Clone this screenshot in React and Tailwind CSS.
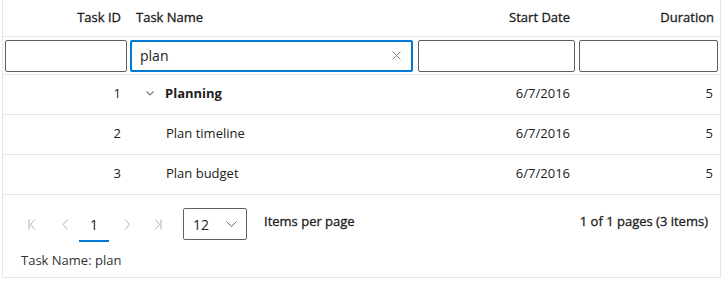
import React from "react";

const font = { fontFamily: '"Open Sans", "Noto Sans", sans-serif' };

function Chevron({ className }) {
  return (
    <svg className={className} width="8" height="5" viewBox="0 0 8 5" fill="none">
      <path d="M0.5 0.5 L4 4 L7.5 0.5" stroke="currentColor" strokeWidth="1.1" />
    </svg>
  );
}

function PagerIcon({ type }) {
  const paths = {
    first: (
      <>
        <path d="M1 0.5 V10.5" stroke="currentColor" strokeWidth="1" />
        <path d="M7 0.5 L2.5 5.5 L7 10.5" stroke="currentColor" strokeWidth="1" fill="none" />
      </>
    ),
    prev: <path d="M5.5 0.5 L1 5.5 L5.5 10.5" stroke="currentColor" strokeWidth="1" fill="none" />,
    next: <path d="M1 0.5 L5.5 5.5 L1 10.5" stroke="currentColor" strokeWidth="1" fill="none" />,
    last: (
      <>
        <path d="M1 0.5 L5.5 5.5 L1 10.5" stroke="currentColor" strokeWidth="1" fill="none" />
        <path d="M7 0.5 V10.5" stroke="currentColor" strokeWidth="1" />
      </>
    ),
  };
  return (
    <svg width="8" height="11" viewBox="0 0 8 11" className="text-[#b0b0b0]">
      {paths[type]}
    </svg>
  );
}

const rows = [
  { id: 1, name: "Planning", date: "6/7/2016", dur: 5, parent: true },
  { id: 2, name: "Plan timeline", date: "6/7/2016", dur: 5 },
  { id: 3, name: "Plan budget", date: "6/7/2016", dur: 5 },
];

const cols = "grid grid-cols-[125px_287px_162px_143px]";

export default function App() {
  return (
    <div className="pl-[2px] bg-white text-[13px] text-[#212121]" style={font}>
      <div className="w-[719px] border-x border-b border-[#e5e5e5] bg-white">
        {/* header */}
        <div className={`${cols} h-[37px] border-b border-[#e5e5e5] items-center text-[#1a1a1a] [-webkit-text-stroke:0.3px]`}>
          <div className="text-right pr-[7px]">Task ID</div>
          <div className="pl-[8px]">Task Name</div>
          <div className="text-right pr-[7px]">Start Date</div>
          <div className="text-right pr-[6px]">Duration</div>
        </div>
        {/* filter */}
        <div className={`${cols} h-[38px] border-b border-[#e5e5e5] items-center`}>
          <div className="pl-[2px] pr-[1px]">
            <div className="h-[32px] border border-[#616161] rounded-[2px]" />
          </div>
          <div className="px-[2px]">
            <div className="h-[32px] border-2 border-[#0078d4] rounded-[2px] flex items-center pl-[8px] pr-[10px]">
              <span className="flex-1 text-[14px]">plan</span>
              <svg width="9" height="9" viewBox="0 0 9 9" className="text-[#8a8a8a]">
                <path d="M0.5 0.5 L8.5 8.5 M8.5 0.5 L0.5 8.5" stroke="currentColor" strokeWidth="1" />
              </svg>
            </div>
          </div>
          <div className="pl-[3px] pr-[2px]">
            <div className="h-[32px] border border-[#616161] rounded-[2px]" />
          </div>
          <div className="px-[2px]">
            <div className="h-[32px] border border-[#616161] rounded-[2px]" />
          </div>
        </div>
        {/* rows */}
        {rows.map((r) => (
          <div key={r.id} className={`${cols} h-[40px] border-b border-[#e5e5e5] items-center pb-[2px]`}>
            <div className="text-right pr-[7px]">{r.id}</div>
            <div className="flex items-center pl-[18px]">
              {r.parent ? (
                <>
                  <Chevron className="text-[#7a7a7a] mr-[11px]" />
                  <span className="font-bold">{r.name}</span>
                </>
              ) : (
                <span className="pl-[20px]">{r.name}</span>
              )}
            </div>
            <div className="text-right pr-[7px]">{r.date}</div>
            <div className="text-right pr-[7px]">{r.dur}</div>
          </div>
        ))}
        {/* pager */}
        <div className="pt-[13px] pb-[6px]">
          <div className="flex items-start h-[34px]">
            <div className="flex items-center h-[32px] pl-[25px]">
              <div className="w-[34px]"><PagerIcon type="first" /></div>
              <div className="w-[17px]"><PagerIcon type="prev" /></div>
              <div className="relative w-[30px] h-[32px] flex items-center justify-center text-[14px]">
                1
                <div className="absolute left-0 right-0 bottom-[-2px] h-[2px] bg-[#0078d4]" />
              </div>
              <div className="w-[30px] pl-[15px]"><PagerIcon type="next" /></div>
              <div className="w-[29px] pl-[15px]"><PagerIcon type="last" /></div>
            </div>
            <div className="ml-[15px] w-[64px] h-[32px] border border-[#616161] rounded-[2px] flex items-center pl-[9px] pr-[9px]">
              <span className="flex-1 text-[14px]">12</span>
              <svg width="11" height="6" viewBox="0 0 11 6" className="text-[#6a6a6a]">
                <path d="M0.5 0.5 L5.5 5.5 L10.5 0.5" stroke="currentColor" strokeWidth="1" fill="none" />
              </svg>
            </div>
            <div className="ml-[17px] h-[28px] flex items-center [-webkit-text-stroke:0.3px]">Items per page</div>
            <div className="flex-1 h-[28px] flex items-center justify-end pr-[12px] [-webkit-text-stroke:0.3px]">
              1 of 1 pages (3 items)
            </div>
          </div>
          <div className="pl-[18px] pt-[9px] text-[#333]">Task Name: plan</div>
        </div>
      </div>
    </div>
  );
}
